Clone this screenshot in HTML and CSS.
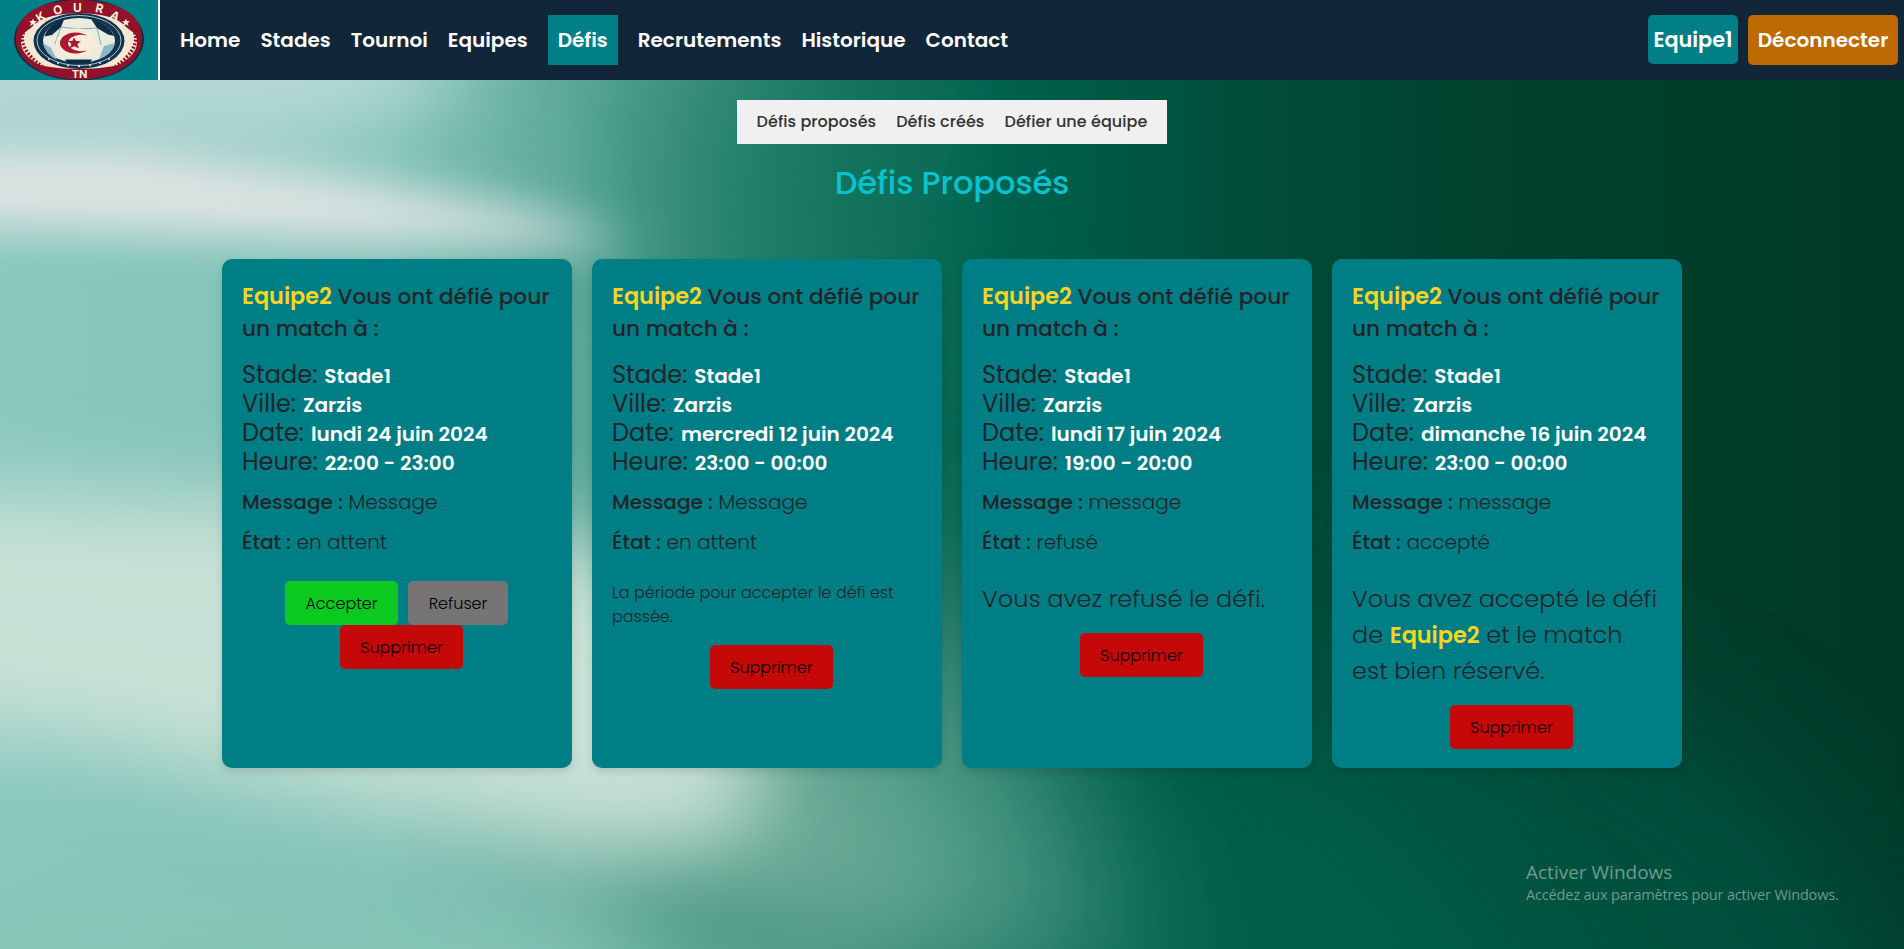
FILE: index.html
```html
<!DOCTYPE html>
<html lang="fr">
<head>
<meta charset="utf-8">
<title>Défis proposés</title>
<link rel="stylesheet" href="styles.css">
</head>
<body>
<svg class="backdrop" viewBox="0 0 1904 949" preserveAspectRatio="none" aria-hidden="true">
  <defs>
    <linearGradient id="sea" x1="0" y1="0" x2="1" y2="0">
      <stop offset="0" stop-color="#8ac8be"/><stop offset=".2" stop-color="#80c2b6"/><stop offset=".3" stop-color="#62ac9d"/>
      <stop offset=".38" stop-color="#3a917d"/><stop offset=".45" stop-color="#14745f"/><stop offset=".53" stop-color="#00604c"/>
      <stop offset=".66" stop-color="#004d39"/><stop offset=".8" stop-color="#00412d"/><stop offset="1" stop-color="#003a28"/>
    </linearGradient>
    <filter id="b20" x="-50%" y="-50%" width="200%" height="200%"><feGaussianBlur stdDeviation="22"/></filter>
    <filter id="b45" x="-50%" y="-50%" width="200%" height="200%"><feGaussianBlur stdDeviation="42"/></filter>
    <filter id="b70" x="-50%" y="-50%" width="200%" height="200%"><feGaussianBlur stdDeviation="75"/></filter>
  </defs>
  <rect width="1904" height="949" fill="url(#sea)"/>
  <path d="M-100 0H480L430 100L300 150H-100Z" fill="#b5d8d6" filter="url(#b45)"/>
  <path d="M1000 560L1500 640L1780 800L2000 1150H900Z" fill="#00513d" filter="url(#b70)"/>
  <path d="M800 640L1150 700L1400 800L1600 1100H700Z" fill="#005f4a" filter="url(#b70)"/>
  <path d="M-100 900H500L900 1000L800 1150H-100Z" fill="#84c6b5" filter="url(#b45)"/>
  <path d="M760 500L960 600L1060 760L1150 1000H650Z" fill="#4a9a84" filter="url(#b70)" opacity=".9"/>
  <path d="M620 60L1000 60L850 400L700 560Z" fill="#077059" filter="url(#b70)" opacity=".45"/>
  <path d="M480 660L800 680L980 900L900 980L700 900L500 840Z" fill="#8fc0ae" filter="url(#b70)" opacity=".6"/>
  <path d="M-100 490L200 500L420 505L600 540L700 650L770 780L740 840L600 850L330 800L100 745L-100 720Z" fill="#c8e1d6" filter="url(#b45)"/>
  <path d="M-100 148L120 146L330 174L520 210L640 243L330 242L-100 224Z" fill="#dbe3e2" filter="url(#b20)"/>
</svg>

<header class="topbar">
  <a class="logo" href="#">
    <svg viewBox="0 0 158 80" width="158" height="80" role="img" aria-label="Koura TN">
      <ellipse cx="79" cy="39.5" rx="65" ry="41" fill="#122b45"/>
      <ellipse cx="79" cy="39.5" rx="63" ry="39.6" fill="#94112a"/>
      <ellipse cx="79" cy="42" rx="58" ry="31" fill="#f3e8d2"/>
      <path d="M16 39Q16 2 79 0Q142 2 142 39L126 27Q116 14 79 13Q42 14 32 27Z" fill="#94112a"/>
      <g fill="none" stroke="#94112a" stroke-width="3.4" stroke-dasharray="2 1.7">
        <path d="M25 29Q15 47 43 67"/><path d="M133 29Q143 47 115 67"/>
      </g>
      <ellipse cx="79" cy="41" rx="45.5" ry="28" fill="#0f3350"/>
      <ellipse cx="79" cy="40.5" rx="42" ry="25" fill="none" stroke="#dce5e3" stroke-width=".8"/>
      <ellipse cx="79" cy="40.5" rx="36" ry="22.5" fill="#e9ecdf"/>
      <path d="M64 19.500L61 27L52 35L44.500 36.500Q48 24 64 19.500Z" fill="#0f2c46"/>
      <path d="M91 19L97 28L108 34.500L114 36Q109 23 91 19Z" fill="#0f2c46"/>
      <path d="M43 43L51 48L57 60Q45 54 43 43Z" fill="#8fb6c7"/>
      <path d="M115 43L104 46L99 59Q113 54 115 43Z" fill="#8fb6c7"/>
      <path d="M65 59.500L92 59.500L90 63H67Z" fill="#0f2c46"/>
      <path d="M61 27L79 29L97 28M97 28L101 45M61 27L55 44" stroke="#88a5b3" fill="none"/>
      <ellipse cx="76" cy="43" rx="20" ry="14.5" fill="#f6ecd8"/>
      <path d="M87 36A15.500 10.500 0 1 0 87 50A12.500 8.200 0 1 1 87 36Z" fill="#ad1530"/>
      <path d="M74 37.500L76 41L81 41.500L77.300 44L79 48.500L74.500 46.200L69.500 48.200L71.500 44L68 41L72.300 41Z" fill="#ad1530"/>
      <path d="M44 66Q60 69 79 69Q98 69 114 66L119 71Q79 88 39 71Z" fill="#94112a"/>
      <g fill="#dce5e3"><circle cx="49" cy="59" r="1"/><circle cx="58" cy="63" r="1"/><circle cx="68" cy="65.500" r="1"/><circle cx="79" cy="66" r="1.200"/><circle cx="90" cy="65.500" r="1"/><circle cx="100" cy="63" r="1"/><circle cx="109" cy="59" r="1"/></g>
      <g fill="#f8efdc">
        <path d="M33 18.500L34 21L37 21.300L34.700 23L35.500 26L33 24.300L30 26L31.200 23L29 21.300L32 21Z"/>
        <path d="M126 18.500L127 21L130 21.300L127.700 23L128.500 26L126 24.300L123 26L124.200 23L122 21.300L125 21Z"/>
      </g>
      <g class="logo-text" text-anchor="middle">
        <text transform="translate(43 20.500) rotate(-32)">K</text>
        <text transform="translate(59 14) rotate(-16)">O</text>
        <text transform="translate(77.500 11.500)">U</text>
        <text transform="translate(98.500 12.500) rotate(12)">R</text>
        <text transform="translate(113 19.500) rotate(28)">A</text>
        <text class="logo-tn" x="79.500" y="77.800">TN</text>
      </g>
    </svg>
  </a>
  <nav class="menu">
    <a class="menu-link" href="#">Home</a>
    <a class="menu-link" href="#">Stades</a>
    <a class="menu-link" href="#">Tournoi</a>
    <a class="menu-link" href="#">Equipes</a>
    <a class="menu-link active" href="#">Défis</a>
    <a class="menu-link" href="#">Recrutements</a>
    <a class="menu-link" href="#">Historique</a>
    <a class="menu-link" href="#">Contact</a>
  </nav>
  <div class="account">
    <a class="team-badge" href="#">Equipe1</a>
    <a class="logout" href="#">Déconnecter</a>
  </div>
</header>

<main class="page">
  <nav class="subnav">
    <a href="#">Défis proposés</a>
    <a href="#">Défis créés</a>
    <a href="#">Défier une équipe</a>
  </nav>
  <h1 class="title">Défis Proposés</h1>

  <section class="cards">
    <article class="card">
      <h2 class="card-head"><b class="team">Equipe2</b> Vous ont défié pour un match à :</h2>
      <dl class="facts">
        <div><dt>Stade:</dt><dd>Stade1</dd></div>
        <div><dt>Ville:</dt><dd>Zarzis</dd></div>
        <div><dt>Date:</dt><dd>lundi 24 juin 2024</dd></div>
        <div><dt>Heure:</dt><dd>22:00 - 23:00</dd></div>
      </dl>
      <p class="note"><b>Message :</b> Message</p>
      <p class="note"><b>État :</b> en attent</p>
      <div class="outcome">
        <div class="choices"><button class="btn accept">Accepter</button><button class="btn refuse">Refuser</button></div>
        <button class="btn delete">Supprimer</button>
      </div>
    </article>

    <article class="card">
      <h2 class="card-head"><b class="team">Equipe2</b> Vous ont défié pour un match à :</h2>
      <dl class="facts">
        <div><dt>Stade:</dt><dd>Stade1</dd></div>
        <div><dt>Ville:</dt><dd>Zarzis</dd></div>
        <div><dt>Date:</dt><dd>mercredi 12 juin 2024</dd></div>
        <div><dt>Heure:</dt><dd>23:00 - 00:00</dd></div>
      </dl>
      <p class="note"><b>Message :</b> Message</p>
      <p class="note"><b>État :</b> en attent</p>
      <div class="outcome">
        <p class="expired">La période pour accepter le défi est passée.</p>
        <button class="btn delete">Supprimer</button>
      </div>
    </article>

    <article class="card">
      <h2 class="card-head"><b class="team">Equipe2</b> Vous ont défié pour un match à :</h2>
      <dl class="facts">
        <div><dt>Stade:</dt><dd>Stade1</dd></div>
        <div><dt>Ville:</dt><dd>Zarzis</dd></div>
        <div><dt>Date:</dt><dd>lundi 17 juin 2024</dd></div>
        <div><dt>Heure:</dt><dd>19:00 - 20:00</dd></div>
      </dl>
      <p class="note"><b>Message :</b> message</p>
      <p class="note"><b>État :</b> refusé</p>
      <div class="outcome">
        <p class="result">Vous avez refusé le défi.</p>
        <button class="btn delete">Supprimer</button>
      </div>
    </article>

    <article class="card">
      <h2 class="card-head"><b class="team">Equipe2</b> Vous ont défié pour un match à :</h2>
      <dl class="facts">
        <div><dt>Stade:</dt><dd>Stade1</dd></div>
        <div><dt>Ville:</dt><dd>Zarzis</dd></div>
        <div><dt>Date:</dt><dd>dimanche 16 juin 2024</dd></div>
        <div><dt>Heure:</dt><dd>23:00 - 00:00</dd></div>
      </dl>
      <p class="note"><b>Message :</b> message</p>
      <p class="note"><b>État :</b> accepté</p>
      <div class="outcome">
        <p class="result">Vous avez accepté le défi<br>de <b class="team">Equipe2</b> et le match<br>est bien réservé.</p>
        <button class="btn delete">Supprimer</button>
      </div>
    </article>
  </section>
</main>

<aside class="activation">
  <p class="activation-title">Activer Windows</p>
  <p class="activation-text">Accédez aux paramètres pour activer Windows.</p>
</aside>
</body>
</html>
```
FILE: styles.css
```css
* { box-sizing: border-box; margin: 0; padding: 0; }

body {
  position: relative;
  height: 949px;
  overflow: hidden;
  font-family: Poppins, Inter, "Open Sans", sans-serif;
  font-weight: 300;
  color: #212529;
  background: #004d39;
}
a { color: inherit; text-decoration: none; }

.backdrop { position: absolute; inset: 0; width: 100%; height: 100%; z-index: -1; }

.topbar { display: flex; align-items: center; height: 80px; padding-right: 6px; background: #12263a; color: #fff; }
.logo { width: 160px; height: 80px; background: #007f86; border-right: 2px solid #fff; overflow: hidden; }
.logo svg { display: block; }
.logo-text { font: 700 12px Inter, sans-serif; fill: #f8efdc; }
.logo-tn { font-size: 11px; }
.menu { display: flex; gap: 20px; margin-left: 20px; font-size: 20px; font-weight: 600; line-height: 30px; }
.menu-link { padding: 10px 0; }
.menu-link.active { padding: 10px; background: #007f86; }
.account { display: flex; align-items: flex-start; gap: 10px; margin-left: auto; font-size: 20px; font-weight: 600; line-height: 30px; }
.team-badge { height: 49px; padding: 10px 0 9px; width: 90px; text-align: center; font-size: 20.800px; border-radius: 5px; background: #007f86; }
.logout { width: 150px; padding: 10px 0; text-align: center; border-radius: 5px; background: #bd6a03; }

.page { display: flex; flex-direction: column; align-items: center; padding-top: 20px; }
.subnav { display: flex; gap: 20px; padding: 10px 20px; background: #f0f0f0; color: #333; font-size: 16px; font-weight: 500; line-height: 24px; letter-spacing: .07px; white-space: nowrap; }
.title { margin-top: 20px; font-size: 32px; font-weight: 500; line-height: 38px; color: #06c3cf; }

.cards { display: grid; grid-template-columns: repeat(4, 350px); gap: 20px; margin-top: 57px; }
.card { height: 509px; padding: 20.500px 20px 20px; border-radius: 10px; background: #007e85; box-shadow: 0 4px 8px rgba(0, 0, 0, .12); }
.card-head { margin-right: -10px; margin-bottom: 16.700px; font-size: 21.600px; font-weight: 500; line-height: 32px; }
.team { font-size: 22.400px; font-weight: 600; color: #f6d423; }
.facts { margin-bottom: 10.800px; }
.facts div { display: flex; align-items: baseline; gap: 7px; height: 28.800px; line-height: 28.800px; }
.facts dt { font-size: 24px; font-weight: 400; }
.facts dd { font-size: 20px; font-weight: 600; color: #fff; }
.note { margin-bottom: 10px; font-size: 20px; line-height: 30px; }
.note b { font-weight: 500; }

.outcome { display: flex; flex-direction: column; align-items: center; margin-top: 24px; }
.outcome p { align-self: stretch; margin-bottom: 16px; }
.expired { font-size: 16px; line-height: 24px; }
.result { font-size: 24px; line-height: 36px; white-space: nowrap; }
.choices { display: flex; gap: 10px; margin-right: 1px; }
.btn { height: 44px; border: 0; border-radius: 5px; font-family: inherit; font-size: 16px; font-weight: 300; color: #000; }
.accept { width: 113px; background: #0ac91f; }
.refuse { width: 100px; background: #767475; }
.delete { width: 123px; margin-left: 9px; background: #c50808; }

.activation { position: absolute; left: 1526px; top: 859px; font-family: "Segoe UI", "Open Sans", sans-serif; font-weight: 400; color: rgba(190, 205, 200, .6); white-space: nowrap; }
.activation-title { font-size: 19px; line-height: 26px; }
.activation-text { font-size: 14.500px; line-height: 20px; letter-spacing: -.17px; }
```
